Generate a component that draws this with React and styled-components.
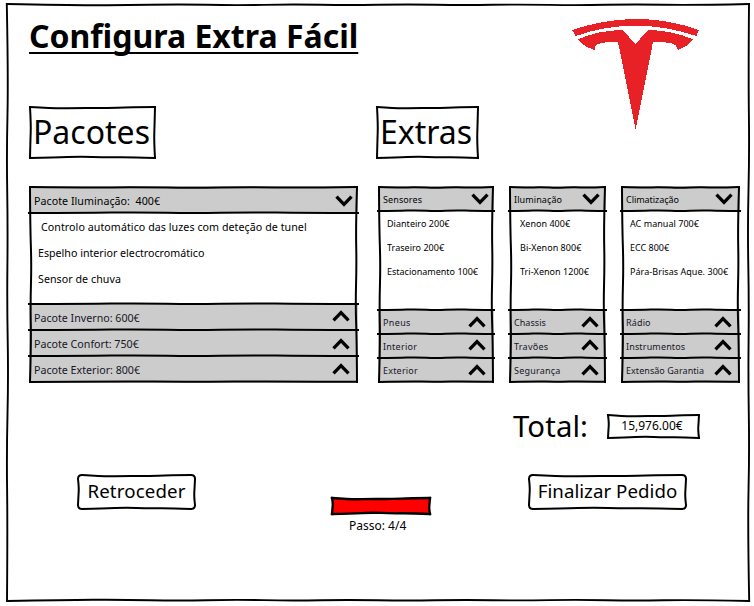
import React from "react";
import styled, { createGlobalStyle, css } from "styled-components";

const GlobalStyle = createGlobalStyle`
  * { box-sizing: border-box; }
  html, body { margin: 0; padding: 0; background: #fff; }
  body { font-family: "Noto Sans", sans-serif; color: #000; }
`;

/* ---- hand-drawn outlines ---- */

const BOX_TOP = [0, 1.5, 0.9, 1.1, 0.2, 0];
const BOX_SIDE = [0, 1, 0.4, 0];
const BOX_BOTTOM = [0, 0.4, 1.5, 0.6, 0.9, 0];

// Points along a straight edge, each pushed along the normal (nx, ny).
function edge(x0, y0, x1, y1, nx, ny, bends) {
  return bends.map((b, i) => {
    const t = i / (bends.length - 1);
    return [x0 + (x1 - x0) * t + nx * b, y0 + (y1 - y0) * t + ny * b];
  });
}

function smooth(points) {
  const f = (n) => n.toFixed(2);
  let d = `M${f(points[0][0])} ${f(points[0][1])}`;
  for (let i = 1; i < points.length - 1; i += 1) {
    const [x, y] = points[i];
    const [u, v] = points[i + 1];
    const last = i === points.length - 2;
    d += `Q${f(x)} ${f(y)} ${f(last ? u : (x + u) / 2)} ${f(last ? v : (y + v) / 2)}`;
  }
  return d;
}

const Ink = styled.svg`
  position: absolute;
  inset: 0;
  width: 100%;
  height: 100%;
  overflow: visible;
  pointer-events: none;
  fill: none;
  stroke: #000;
  stroke-width: ${(p) => p.$weight || 2};
  stroke-linecap: ${(p) => (p.$round ? "round" : "square")};
`;

function Outline({ w, h, r = 0, lines = [], weight, top = BOX_TOP, side = BOX_SIDE, bottom = BOX_BOTTOM }) {
  const a = 1;
  const R = w - 1;
  const B = h - 1;
  return (
    <Ink aria-hidden="true" $weight={weight} $round={r > 0} viewBox={`0 0 ${w} ${h}`}>
      <path d={smooth(edge(a + r, a, R - r, a, 0, 1, top))} />
      <path d={smooth(edge(R, a + r, R, B - r, -1, 0, [...side].reverse()))} />
      <path d={smooth(edge(a + r, B, R - r, B, 0, -1, bottom))} />
      <path d={smooth(edge(a, a + r, a, B - r, 1, 0, side))} />
      {r > 0 && (
        <path
          d={`M${a} ${a + r}Q${a} ${a} ${a + r} ${a}M${R - r} ${a}Q${R} ${a} ${R} ${a + r}M${R} ${B - r}Q${R} ${B} ${R - r} ${B}M${a + r} ${B}Q${a} ${B} ${a} ${B - r}`}
        />
      )}
      {lines.map((y) => (
        <path key={y} d={smooth(edge(0, y, w, y, 0, -1, [0, 0.1, 0.8, -0.3, 0.8, 0.1, 0]))} />
      ))}
    </Ink>
  );
}

/* ---- page ---- */

const Page = styled.main`
  width: 754px;
  height: 606px;
  padding: 3px 4px 4px 6px;
  background: #fff;
`;

const Window = styled.div`
  position: relative;
  width: 744px;
  height: 599px;
  display: flex;
  flex-direction: column;
`;

const Header = styled.header`
  display: flex;
  justify-content: space-between;
  align-items: flex-start;
  height: 103px;
  padding: 11px 50px 0 23px;
`;

const Title = styled.h1`
  margin: 0;
  font-size: 32px;
  line-height: 44px;
  font-weight: 700;
  white-space: nowrap;
  text-decoration: underline;
  text-decoration-thickness: 2px;
  text-underline-offset: 4px;
  text-decoration-skip-ink: none;
`;

const Logo = styled.svg`
  display: block;
  width: 129px;
  height: 111px;
  margin-top: 5px;
  fill: #e82127;
  shape-rendering: crispEdges;
`;

const Headings = styled.div`
  display: grid;
  grid-template-columns: 347px auto;
  justify-content: start;
  padding: 0 0 0 23px;
`;

const Heading = styled.h2`
  position: relative;
  width: ${(p) => p.$w}px;
  height: 53px;
  margin: 0;
  padding: 0 0 0 4px;
  font-size: 32px;
  font-weight: 400;
  line-height: 52px;
  white-space: nowrap;
`;

const Panels = styled.section`
  display: flex;
  align-items: flex-start;
  padding: 27px 0 0 23px;
`;

const Accordion = styled.div`
  position: relative;
  width: ${(p) => p.$w}px;
  margin-right: ${(p) => p.$gap || 0}px;
  padding-bottom: 1px;
  background: #ccc;
`;

const compact = css`
  font-size: 9px;
  line-height: 24px;
`;

const AccordionHead = styled.div`
  display: flex;
  align-items: flex-start;
  justify-content: space-between;
  height: ${(p) => p.$h}px;
  padding: ${(p) => p.$padTop}px ${(p) => p.$padRight}px 0 ${(p) => p.$padLeft}px;
  color: ${(p) => (p.$open ? "#000" : "#161629")};
  font-size: 10.667px;
  line-height: 26px;
  white-space: pre;
  ${(p) => p.$small && compact}
`;

const AccordionBody = styled.ul`
  height: ${(p) => p.$h}px;
  margin: 0;
  padding: 1px 0 0 ${(p) => p.$padLeft}px;
  background: #fff;
  list-style: none;
  font-size: 10.667px;
  line-height: 26px;
  white-space: pre;
  ${(p) => p.$small && compact}
`;

const Item = styled.li`
  padding-left: ${(p) => p.$indent || 0}px;
  letter-spacing: ${(p) => p.$track || 0}px;
`;

const Label = styled.span`
  letter-spacing: ${(p) => p.$track || 0}px;
`;

const ChevronIcon = styled.svg`
  flex: none;
  width: 18px;
  height: 12px;
  margin-top: ${(p) => p.$top}px;
  fill: none;
  stroke: #000;
  stroke-width: 3.3;
`;

function Chevron({ open, top }) {
  return (
    <ChevronIcon viewBox="0 0 18 12" $top={top} aria-hidden="true">
      <path d={open ? "M1.5 1.6 9 9.3 16.5 1.6" : "M1.5 10.4 9 2.7 16.5 10.4"} />
    </ChevronIcon>
  );
}

function AccordionPanel({ data }) {
  const { w, gap, small, headH, bodyH, rowH, padLeft, bodyLeft, openRight, shutRight, openTop, head, items, rows } = data;
  const lines = [headH, headH + bodyH, headH + bodyH + rowH, headH + bodyH + rowH * 2];
  const h = headH + bodyH + rowH * 3 + 1;
  return (
    <Accordion $w={w} $gap={gap}>
      <AccordionHead $open $small={small} $h={headH} $padTop={2} $padLeft={padLeft} $padRight={openRight}>
        <Label $track={head[1]}>{head[0]}</Label>
        <Chevron open top={openTop} />
      </AccordionHead>
      <AccordionBody $small={small} $h={bodyH} $padLeft={bodyLeft}>
        {items.map(([text, track, indent]) => (
          <Item key={text} $track={track} $indent={indent}>{text}</Item>
        ))}
      </AccordionBody>
      {rows.map(([text, track, top]) => (
        <AccordionHead key={text} $small={small} $h={rowH} $padTop={1} $padLeft={padLeft} $padRight={shutRight}>
          <Label $track={track}>{text}</Label>
          <Chevron top={top} />
        </AccordionHead>
      ))}
      <Outline
        w={w}
        h={h}
        lines={lines}
        top={[0, 0.6, 0.2, 1, 0, 0.8, 0]}
        side={[0, 0.2, 1.5, 0.4, 1.2, 0]}
        bottom={[0, 0.6, 0.2, 0.8, 0.2]}
      />
    </Accordion>
  );
}

const small = { small: true, headH: 25, bodyH: 99, rowH: 24, openTop: 5 };

const PANELS = [
  {
    w: 329, gap: 20, headH: 27, bodyH: 91, rowH: 26, padLeft: 5, bodyLeft: 9, openRight: 5, shutRight: 8, openTop: 7,
    head: ["Pacote Iluminação:  400€", 0.04],
    items: [["Controlo automático das luzes com deteção de tunel", 0.06, 3], ["Espelho interior electrocromático", 0], ["Sensor de chuva", 0.05]],
    rows: [["Pacote Inverno: 600€", 0, 5], ["Pacote Confort: 750€", 0, 7], ["Pacote Exterior: 800€", 0, 6]],
  },
  {
    ...small, w: 116, gap: 15, padLeft: 5, bodyLeft: 9, openRight: 5, shutRight: 8,
    head: ["Sensores", 0.1],
    items: [["Dianteiro 200€", 0.03], ["Traseiro 200€", 0.03], ["Estacionamento 100€", 0]],
    rows: [["Pneus", 0.35, 5], ["Interior", 0.25, 4], ["Exterior", 0.2, 5]],
  },
  {
    ...small, w: 97, gap: 15, padLeft: 5, bodyLeft: 11, openRight: 6, shutRight: 7,
    head: ["Iluminação", 0.1],
    items: [["Xenon 400€", 0.03], ["Bi-Xenon 800€", 0.03], ["Tri-Xenon 1200€", 0.03]],
    rows: [["Chassis", 0.05, 5], ["Travões", 0.25, 4], ["Segurança", 0.2, 5]],
  },
  {
    ...small, w: 119, padLeft: 5, bodyLeft: 9, openRight: 7, shutRight: 8,
    head: ["Climatização", -0.05],
    items: [["AC manual 700€", 0.03], ["ECC 800€", 0], ["Pára-Brisas Aque. 300€", 0.05]],
    rows: [["Rádio", 0.15, 5], ["Instrumentos", 0.15, 4], ["Extensão Garantia", 0.05, 5]],
  },
];

const Total = styled.section`
  display: flex;
  align-items: flex-start;
  padding: 31px 0 0 507px;
`;

const TotalLabel = styled.div`
  width: 94px;
  font-size: 29.333px;
  line-height: 24px;
  letter-spacing: 0.1px;
`;

const TotalValue = styled.div`
  position: relative;
  width: 93px;
  height: 25px;
  padding-right: 3px;
  font-size: 12px;
  line-height: 23px;
  text-align: center;
`;

const Actions = styled.footer`
  display: flex;
  align-items: flex-start;
  padding: 35px 0 0 71px;
`;

const Button = styled.button`
  position: relative;
  width: ${(p) => p.$w}px;
  height: 36px;
  padding: 0 0 2px;
  border: 0;
  background: none;
  color: #000;
  font: 18.667px/34px "Noto Sans", sans-serif;
  letter-spacing: ${(p) => p.$track}px;
  text-align: center;
  white-space: nowrap;
`;

const Progress = styled.div`
  width: 100px;
  margin: 23px 97px 0 135px;
  font-size: 12px;
  line-height: 16px;
`;

const Bar = styled.div`
  position: relative;
  height: 18px;
  padding: 1px;
  background: #f00 content-box;
`;

const Step = styled.div`
  padding: 3px 0 0 18px;
  white-space: nowrap;
`;

const FRAME_TOP = [0, 1, 1.4, 0.2, 1.4, 0.3, 1.3, 0.2, 1.2, 0.4, 1.4, 0.2, 1.3, 0];
const FRAME_SIDE = [-0.2, 1.3, -0.4, 0.8, 0, 1.4, -0.4, 0.6, 0];

export default function App() {
  return (
    <>
      <GlobalStyle />
      <Page>
        <Window>
          <Outline w={744} h={599} weight={1.9} top={FRAME_TOP} side={FRAME_SIDE} bottom={FRAME_TOP} />
          <Header>
            <Title>Configura Extra Fácil</Title>
            <Logo viewBox="33 27 387 333" role="img" aria-label="Tesla">
              <path d="M36 60Q131 28 226 27T417 60L409 78Q317 47 226 47T47 78Z" />
              <path d="M53 88Q116 61 188 60L226 102 265 60Q336 61 399 88 382 110 353 120C350 103 344 96 279 96L227 358 174 96C112 96 104 103 104 120 76 111 64 101 53 88Z" />
            </Logo>
          </Header>
          <Headings>
            <Heading $w={127}>Pacotes<Outline w={127} h={53} /></Heading>
            <Heading $w={103}>Extras<Outline w={103} h={53} /></Heading>
          </Headings>
          <Panels>
            {PANELS.map((data) => <AccordionPanel key={data.head[0]} data={data} />)}
          </Panels>
          <Total>
            <TotalLabel>Total:</TotalLabel>
            <TotalValue>15,976.00€<Outline w={93} h={25} /></TotalValue>
          </Total>
          <Actions>
            <Button $w={119} $track={0.15}>Retroceder<Outline w={119} h={36} r={4} /></Button>
            <Progress>
              <Bar><Outline w={100} h={18} weight={2.3} /></Bar>
              <Step>Passo: 4/4</Step>
            </Progress>
            <Button $w={159} $track={0.05}>Finalizar Pedido<Outline w={159} h={36} r={4} /></Button>
          </Actions>
        </Window>
      </Page>
    </>
  );
}
